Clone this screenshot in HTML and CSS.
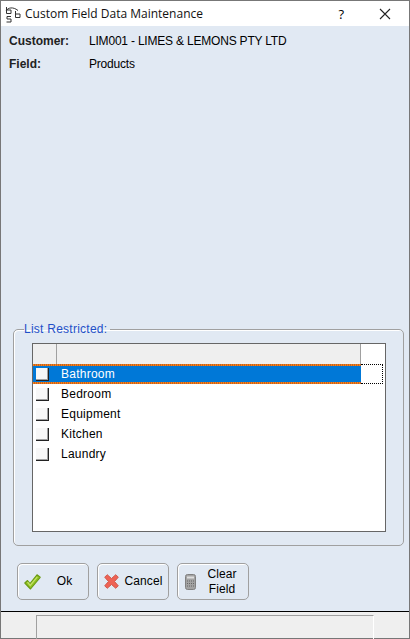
FILE: index.html
```html
<!DOCTYPE html>
<html lang="en">
<head>
    <meta charset="UTF-8">
    <meta name="viewport" content="width=device-width, initial-scale=1.0">
    <title>Custom Field Data Maintenance</title>
    <link rel="stylesheet" href="styles.css">
</head>
<body>
    <div class="window">
        <!-- Title bar -->
        <div class="titlebar">
            <svg class="app-icon" width="16" height="17" viewBox="0 0 16 17" fill="none" stroke="#333" stroke-width="1">
                <path d="M1.500 1v6.500h4.500V4H1.500"/>
                <path d="M10.500 5v6.500H15V8h-4.500"/>
                <path d="M1 5C3 1.500 8 .5 13 4.500"/>
                <path d="M6 10.500H2V13h4v3H1.500"/>
            </svg>
            <span class="title">Custom Field Data Maintenance</span>
            <span class="help">?</span>
            <svg class="close" width="12" height="12" viewBox="0 0 12 12" stroke="#222" stroke-width="1.100">
                <path d="M1 1l10 10M11 1L1 11"/>
            </svg>
        </div>

        <div class="content">
            <div class="info">
                <div class="info-row"><b>Customer:</b><span class="info-value">LIM001 - LIMES &amp; LEMONS PTY LTD</span></div>
                <div class="info-row"><b>Field:</b><span class="info-value">Products</span></div>
            </div>

            <fieldset class="group">
                <legend>List Restricted:</legend>
                <div class="list">
                    <div class="list-head">
                        <div class="head-check"></div>
                        <div class="head-name"></div>
                    </div>
                    <div class="list-row selected">
                        <div class="sel-cell"><i class="check"></i><span>Bathroom</span></div>
                        <div class="focus-end"></div>
                    </div>
                    <div class="list-row"><i class="check"></i><span>Bedroom</span></div>
                    <div class="list-row"><i class="check"></i><span>Equipment</span></div>
                    <div class="list-row"><i class="check"></i><span>Kitchen</span></div>
                    <div class="list-row"><i class="check"></i><span>Laundry</span></div>
                </div>
            </fieldset>

            <div class="buttons">
                <button class="btn">
                    <svg width="17" height="16" viewBox="0 0 17 16">
                        <path d="M.800 9L3.500 6.500l2.500 3L13 .800l3.200 2.500L6.500 15z" fill="#8fc31f" stroke="#6b9a14" stroke-width="1.100" stroke-linejoin="round"/>
                        <path d="M3.500 8.200l2.700 3.300L13.300 2.800" fill="none" stroke="#c6e06a" stroke-width="1.200"/>
                    </svg>
                    <span class="btn-label">Ok</span>
                </button>
                <button class="btn">
                    <svg width="15" height="15" viewBox="0 0 15 15">
                        <path d="M3.200.700L7.500 4.500 11.800.700l2.500 2.500L10.500 7.500l3.800 4.300-2.500 2.500-4.300-3.800-4.300 3.800-2.500-2.500L4.500 7.500.700 3.200z" fill="#ee6255" stroke="#d0584a" stroke-width="1" stroke-linejoin="round"/>
                    </svg>
                    <span class="btn-label">Cancel</span>
                </button>
                <button class="btn btn-clear">
                    <svg width="11" height="16" viewBox="0 0 11 16">
                        <rect x="0.500" y="0.500" width="10" height="15" rx="2" fill="#a3a3a3" stroke="#808080"/>
                        <rect x="2" y="2.500" width="7" height="2" fill="#dedede"/>
                        <path d="M2 7h7M2 9.500h7M2 12h7" stroke="#666" stroke-width="1.200" stroke-dasharray="1 1"/>
                    </svg>
                    <span class="btn-label">Clear<br>Field</span>
                </button>
            </div>
        </div>

        <!-- Status bar -->
        <div class="statusbar">
            <div class="status-panel"></div>
        </div>
    </div>
</body>
</html>
```

FILE: styles.css
```css
html, body {
    margin: 0;
    height: 100%;
}

body {
    font-family: "Liberation Sans", Arial, sans-serif;
    font-size: 12px;
    color: #000;
    overflow: hidden;
}

.window {
    height: 639px;
    display: flex;
    flex-direction: column;
    box-sizing: border-box;
    border: 1px solid #777;
    background: #e1e9f3;
}

.titlebar {
    height: 25px;
    flex: none;
    background: #fff;
    display: flex;
    align-items: center;
    padding-left: 4px;
    font-family: "Open Sans", "Liberation Sans", sans-serif;
}

.app-icon {
    flex: none;
    margin-top: 2px;
}

.title {
    margin-left: 4px;
    flex: 1;
    font-size: 12px;
    color: #111;
}

.help {
    font-size: 13px;
    margin-right: 35px;
}

.close {
    margin-right: 18px;
}

.content {
    flex: 1;
    display: flex;
    flex-direction: column;
    padding: 0 5px 0 8px;
}

.info {
    height: 296px;
    padding-top: 4px;
    box-sizing: border-box;
}

.info-row {
    display: flex;
    height: 23px;
    line-height: 23px;
}

.info-row b {
    width: 80px;
    color: #222;
}

.info-value {
    letter-spacing: -0.2px;
}

.group {
    margin: 0 0 0 4px;
    padding: 7px 17px 0 18px;
    height: 224px;
    box-sizing: border-box;
    border: 1px solid #a0a0a0;
    border-radius: 5px;
    box-shadow: inset 1px 1px 0 #fff;
}

.group legend {
    padding: 0 3px 0 0;
    margin-left: -8px;
    color: #1f50c8;
    font-size: 12px;
    letter-spacing: 0.25px;
}

.list {
    height: 189px;
    box-sizing: border-box;
    border: 1px solid #666;
    background: #fff;
}

.list-head {
    display: flex;
    height: 20px;
}

.head-check {
    width: 23px;
    background: #efefef;
    border-right: 1px solid #a0a0a0;
}

.head-name {
    width: 303px;
    background: #efefef;
    border-right: 1px solid #a0a0a0;
}

.list-row {
    height: 20px;
    display: flex;
    align-items: center;
    box-sizing: border-box;
    padding-left: 3px;
}

.list-row span {
    margin-left: 12px;
    letter-spacing: 0.25px;
}

.list-row.selected {
    padding: 0 2px 0 0;
    color: #fff;
}

/* orange edge drawn as 2px tiles so top and bottom come out alike */
.sel-cell {
    width: 328px;
    height: 20px;
    flex: none;
    display: flex;
    align-items: center;
    box-sizing: border-box;
    padding-left: 3px;
    background-color: #0078d7;
    background-image:
        linear-gradient(90deg, #ff7f10 50%, #b8622a 50%),
        linear-gradient(90deg, #ff7f10 50%, #b8622a 50%);
    background-size: 2px 2px;
    background-position: left top, left bottom;
    background-repeat: repeat-x;
}

.focus-end {
    flex: 1;
    height: 20px;
    box-sizing: border-box;
    border: 1px dotted #000;
    border-left: none;
}

.check {
    display: block;
    flex: none;
    width: 12px;
    height: 12px;
    background: #f7f7f7;
    border-right: 1px solid #222;
    border-bottom: 1px solid #222;
    box-shadow: inset -1px -1px 0 #a0a0a0;
}

.buttons {
    display: flex;
    gap: 8px;
    margin: 17px 0 0 8px;
}

.btn {
    width: 72px;
    height: 37px;
    padding: 0 0 0 6px;
    display: flex;
    align-items: center;
    background: #e1e9f3;
    border: 1px solid #a0a0a0;
    border-radius: 5px;
    box-shadow: inset 1px 1px 0 #fff;
    font-family: inherit;
    font-size: 12px;
    color: #000;
}

.btn-clear {
    padding-left: 7px;
}

.btn-label {
    flex: 1;
    text-align: center;
    line-height: 15px;
    letter-spacing: 0.1px;
}

.statusbar {
    height: 27px;
    flex: none;
    background: #efefef;
    border-top: 1px solid #000;
    box-sizing: border-box;
    padding: 3px 35px 0 35px;
}

.status-panel {
    height: 100%;
    border-top: 1px solid #a0a0a0;
    border-left: 1px solid #a0a0a0;
    border-right: 1px solid #fff;
}
```
